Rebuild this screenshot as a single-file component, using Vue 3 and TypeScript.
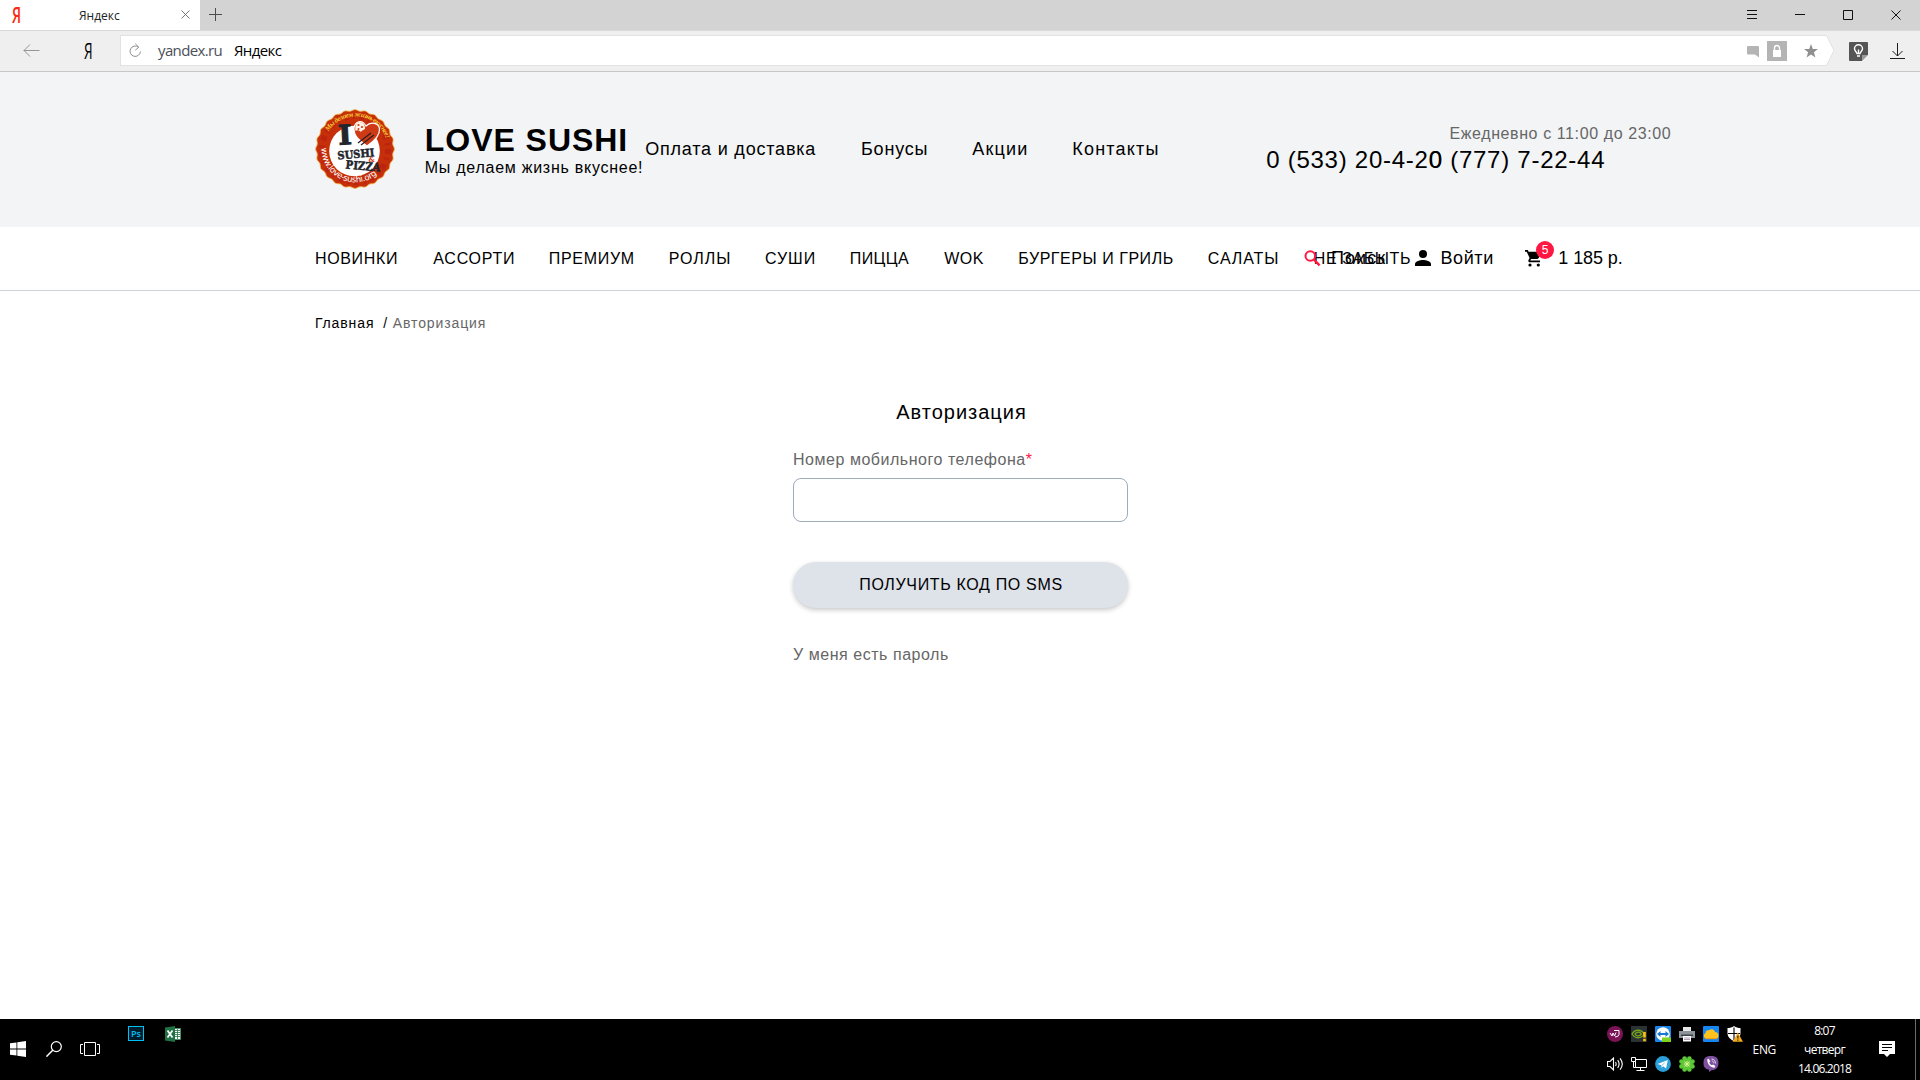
<script setup lang="ts">
interface Item {
  text: string
  width: number
  tracking: number
}

const menu: Item[] = [
  { text: 'Оплата и доставка', width: 215.8, tracking: 0.8 },
  { text: 'Бонусы', width: 111.3, tracking: 0.8 },
  { text: 'Акции', width: 100, tracking: 1.15 },
  { text: 'Контакты', width: 90, tracking: 1.2 },
]

const categories: Item[] = [
  { text: 'НОВИНКИ', width: 118.4, tracking: 0.68 },
  { text: 'АССОРТИ', width: 115.5, tracking: 0.75 },
  { text: 'ПРЕМИУМ', width: 120, tracking: 0.69 },
  { text: 'РОЛЛЫ', width: 96.1, tracking: 0.95 },
  { text: 'СУШИ', width: 84.9, tracking: 1 },
  { text: 'ПИЦЦА', width: 94.6, tracking: 0.41 },
  { text: 'WOK', width: 73.9, tracking: 0.4 },
  { text: 'БУРГЕРЫ И ГРИЛЬ', width: 189.6, tracking: 0.54 },
  { text: 'САЛАТЫ', width: 105.9, tracking: 0.88 },
  { text: 'НЕ ЗАБЫТЬ', width: 100, tracking: 0.6 },
]

const scallops: string = (() => {
  const steps = 144
  const points: string[] = []
  for (let i = 0; i < steps; i++) {
    const a = (i / steps) * Math.PI * 2
    const r = 38.7 + Math.cos(a * 24) * 0.7
    points.push(`${(40 + r * Math.cos(a)).toFixed(2)},${(40 + r * Math.sin(a)).toFixed(2)}`)
  }
  return points.join(' ')
})()

const itemStyle = (i: Item) => ({ width: `${i.width}px`, letterSpacing: `${i.tracking}px` })
</script>

<template>
  <div class="screen">
    <div class="tabs">
      <div class="tab">
        <span class="ya ya-red">Я</span>
        <span class="tab-title">Яндекс</span>
        <svg class="tab-close" width="9" height="9" viewBox="0 0 9 9"><path d="M.5.5l8 8M8.5.5l-8 8" stroke="#757575" fill="none" /></svg>
      </div>
      <svg class="plus" width="13" height="13" viewBox="0 0 13 13"><path d="M6.5 0v13M0 6.5h13" stroke="#4c4c4c" fill="none" /></svg>
      <svg class="window-controls" width="154" height="12" viewBox="0 0 154 12" fill="none" stroke="#111">
        <path d="M0 1.5h10M0 5.5h10M0 9.5h10M48 5.5h10M96.5 1.5h9v9h-9zM144.500 1.500l9 9M153.500 1.500l-9 9" />
      </svg>
    </div>

    <div class="toolbar">
      <svg class="back" width="17" height="13" viewBox="0 0 17 13" fill="none" stroke="#959595"><path d="M16.500 6.500H.8M7 .5l-6 6 6 6" /></svg>
      <span class="ya ya-black">Я</span>
      <div class="address">
        <svg class="reload" width="13" height="15" viewBox="0 0 13 15" fill="none" stroke="#8f8f8f"><path d="M9.500 4.200A5.200 5.200 0 1 0 11.400 8.500M6.300 .8l3.500 3.400-3.500 3" /></svg>
        <span class="host">yandex.ru</span>
        <span class="page-title">Яндекс</span>
        <svg class="speech" width="12" height="12" viewBox="0 0 12 12"><path d="M1 0h10q1 0 1 1v10.500L8 8.500H1q-1 0-1-1V1q0-1 1-1z" fill="#b4b4b4" /></svg>
        <svg class="lock" width="20" height="20" viewBox="0 0 20 20"><path fill="#b4b4b4" d="M0 0h20v20H0z" /><path fill="#fff" d="M6 9h8v7H6z" /><path d="M7.500 9V7a2.500 2.500 0 0 1 5 0v2" stroke="#fff" stroke-width="1.400" fill="none" /></svg>
        <svg class="star" width="14" height="14" viewBox="0 0 14 14"><path fill="#8f8f8f" d="M7 0l1.800 4.900 5.200.2-4.100 3.200 1.500 5.200L7 10.500l-4.400 3 1.500-5.200L0 5.100l5.200-.2z" /></svg>
      </div>
      <svg class="cap" width="10" height="31" viewBox="0 0 10 31"><path d="M0 0l1.500.5 7.500 15-7.500 15L0 31z" fill="#fff" /><path d="M0 .5h1.500l7.500 15-7.500 15H0" fill="none" stroke="#e2e2e2" /></svg>
      <svg class="bulb" width="19" height="19" viewBox="0 0 19 19">
        <path fill="#555" d="M1 0h17q1 0 1 1v12h-6v6H1q-1 0-1-1V1q0-1 1-1z" /><path fill="#999" d="M13 13h6l-6 6z" />
        <path d="M8 11.500C7.500 9.500 5.500 9 5.500 6.800a4 4 0 0 1 8 0C13.500 9 11.500 9.500 11 11.500z" fill="none" stroke="#fff" stroke-width="1.400" /><path d="M8 14h3M9.500 11V7.500" stroke="#fff" stroke-width="1.400" />
      </svg>
      <svg class="download" width="15" height="17" viewBox="0 0 15 17" fill="none" stroke="#1b1b1b"><path d="M7.500 0v13M2.500 8l5 5 5-5M0 15.500h15" /></svg>
    </div>

    <header class="header">
      <svg class="logo" width="80" height="80" viewBox="0 0 80 80">
        <defs>
          <path id="arc-top" d="M13.500 22.500A32 32 0 0 1 72.500 42" />
          <path id="arc-bottom" d="M6.500 39A33.800 33.800 0 0 0 66 61.500" />
        </defs>
        <polygon :points="scallops" fill="#c5300b" stroke="#f0b545" stroke-width=".8" />
        <circle cx="40" cy="40" r="33" fill="none" stroke="#b51715" stroke-width="6" stroke-dasharray="5 4 2 5" opacity=".5" />
        <circle cx="39.500" cy="42" r="25.300" fill="#fff" />
        <text class="script-text"><textPath href="#arc-top" textLength="72">Мы делаем жизнь вкуснее!</textPath></text>
        <text class="site-text"><textPath href="#arc-bottom" textLength="77">www.love-sushi.org</textPath></text>
        <path d="M52 37C44 31 38.500 27 39 19c1-7 8-9 12-2 5-5 13-3 13.500 3C65 27 58 33 52 37z" fill="#cf3a16" stroke="#fff" stroke-width="1.200" />
        <path d="M40.500 22c-1-6 1-9 4-9 4 0 6 4 5.500 7-1 1-3 1-4 3-2-2-4-2-5.500-1z" fill="#fff3e8" />
        <g fill="#cf3a16"><circle cx="43.500" cy="16" r="1.100" /><circle cx="47" cy="18" r="1.100" /><circle cx="43.500" cy="20" r="1" /></g>
        <path d="M43 34l13-10M46 36l13-10" stroke="#2a2020" stroke-width="1.300" />
        <g font-family="'DejaVu Serif', serif" font-weight="bold" fill="#22252c" stroke="#22252c" stroke-width=".5">
          <text x="23.500" y="35.500" font-size="27" textLength="13.500" lengthAdjust="spacingAndGlyphs" transform="rotate(-3 30 30)" stroke-width="1">I</text>
          <text x="22.500" y="49" font-size="11" textLength="37" lengthAdjust="spacingAndGlyphs" transform="rotate(-5 40 47)">SUSHI</text>
          <text x="30.500" y="61" font-size="11.500" textLength="35" lengthAdjust="spacingAndGlyphs" transform="rotate(5 48 58)">PIZZA</text>
          <text x="53.500" y="52.500" font-size="7" fill="#d63a14" stroke="none">&amp;</text>
        </g>
      </svg>
      <div class="brand">
        <h1>LOVE SUSHI</h1>
        <p>Мы делаем жизнь вкуснее!</p>
      </div>
      <nav class="menu">
        <a v-for="m in menu" :key="m.text" :style="itemStyle(m)">{{ m.text }}</a>
      </nav>
      <div class="contacts">
        <div class="hours">Ежедневно с 11:00 до 23:00</div>
        <div class="phones">
          <a>0 (533) 20-4-20</a>
          <a>0 (777) 7-22-44</a>
        </div>
      </div>
    </header>

    <div class="category-bar">
      <nav class="categories">
        <a v-for="c in categories" :key="c.text" :style="itemStyle(c)">{{ c.text }}</a>
      </nav>
      <div class="action search">
        <svg width="17" height="17" viewBox="0 0 17 17" fill="none" stroke="#ff1744"><circle cx="6.300" cy="6" r="4.800" stroke-width="2" /><path d="M9.800 9.500l5.800 5.800" stroke-width="2.400" /></svg>
        <span>Поиск</span>
      </div>
      <div class="action login">
        <svg width="16" height="16" viewBox="0 0 16 16"><circle cx="8" cy="4" r="4" /><path d="M0 16v-2c0-2.700 5.300-4 8-4s8 1.300 8 4v2z" /></svg>
        <span>Войти</span>
      </div>
      <div class="action cart">
        <svg width="17" height="17" viewBox="0 0 17 17"><path d="M0 0h2.800l.8 1.700H16c.6 0 1 .6.700 1.100l-3 5.300c-.3.500-.8.800-1.400.8H6.100L5.300 10.300l.2.300H15v1.700H5c-1.300 0-2.100-1.300-1.500-2.400l1.100-2L1.700 1.700H0z" /><circle cx="5" cy="15" r="1.600" /><circle cx="13.300" cy="15" r="1.600" /></svg>
        <b class="badge">5</b>
        <span>1 185 р.</span>
      </div>
    </div>

    <main class="content">
      <div class="crumbs"><a>Главная</a><i>/</i><span>Авторизация</span></div>
      <form class="auth" @submit.prevent>
        <h2>Авторизация</h2>
        <label for="phone">Номер мобильного телефона<em>*</em></label>
        <input id="phone" type="tel" />
        <button type="submit">ПОЛУЧИТЬ КОД ПО SMS</button>
        <a class="alt">У меня есть пароль</a>
      </form>
    </main>

    <footer class="taskbar">
      <svg class="start" width="16" height="16" viewBox="0 0 16 16" fill="#fff"><path d="M0 2.300l6.500-.9v6.100H0zM7.300 1.200L16 0v7.500H7.300zM0 8.400h6.500v6.200L0 13.700zM7.300 8.400H16V16l-8.700-1.200z" /></svg>
      <svg class="find" width="16" height="16" viewBox="0 0 16 16" fill="none" stroke="#fff" stroke-width="1.200"><circle cx="10.300" cy="5.600" r="5" /><path d="M6.700 9.200L.4 15.600" stroke-width="1.500" /></svg>
      <svg class="views" width="20" height="14" viewBox="0 0 20 14" fill="none" stroke="#fff"><path d="M4.500.5h11v13h-11zM3 2.500H.5v9H3M17 2.500h2.500v9H17" /></svg>
      <span class="ps">Ps</span>
      <svg class="excel" width="16" height="16" viewBox="0 0 16 16"><path fill="#fff" d="M8 2h8v12H8z" /><path d="M10 4.500h5M10 6.500h5M10 8.500h5M10 10.500h5M12.500 3v10M15.500 2v12M9 2.500h7M9 13.500h7" stroke="#207245" stroke-width=".8" /><path fill="#207245" d="M0 1.500L10 0v16L0 14.500z" /><path d="M2.500 4.500l5 7M7.500 4.500l-5 7" stroke="#fff" stroke-width="1.700" /></svg>

      <div class="tray">
        <svg viewBox="0 0 16 16"><circle cx="8" cy="8" r="8" fill="#7b1457" /><path d="M3 7l2 3 1-3 1.500 3L9 6.500M7 4.500h5v4q-.5 2.500-4 2.500" fill="none" stroke="#fff" stroke-width="1" /></svg>
        <svg viewBox="0 0 16 16"><path fill="#2b3234" d="M0 0h16v16H0z" /><path d="M1 8c3-5 9-5 12.500 0-3.500 5-9.500 5-12.500 0zM4 8c2-2.500 5-2.500 6.500 0-2 2.500-5 2.500-6.500 0z" fill="none" stroke="#76a51c" stroke-width="1.300" /><path d="M13.500 6v5.500M13.500 12.800v2.400" stroke="#ffc20e" stroke-width="2.600" /></svg>
        <svg viewBox="0 0 16 16"><rect width="16" height="16" rx="1" fill="#1b86e5" /><circle cx="8" cy="8" r="6.800" fill="#fff" /><path d="M2 8l3.500-3v2h5V5L14 8l-3.500 3V9h-5v2z" fill="#1b78d0" /><path fill="#7fd321" d="M7 11.500h9V16H7z" /></svg>
        <svg viewBox="0 0 16 16"><path fill="#e8e8e8" d="M4 1h8v4H4z" /><path fill="#8d9499" d="M0 5h16v7H0z" /><path fill="#3b4044" d="M2 8.500h12V10H2z" /><path fill="#fff" d="M4 10h8v5.500H4z" /><path d="M5 12h6M5 13.500h6" stroke="#879" stroke-width=".7" /></svg>
        <svg viewBox="0 0 16 16"><rect width="16" height="16" rx="1" fill="#1686f0" /><path fill="#ffc21f" d="M3.500 13a3.200 3.200 0 0 1-1-6A3 3 0 0 1 6 4.300 3.500 3.500 0 0 1 12 6a3.600 3.600 0 0 1 1 7z" /><path d="M2 12.700h12" stroke="#f2930b" /></svg>
        <svg viewBox="0 0 16 16"><path fill="#fff" d="M7 0c2 1.600 4 2 6.500 2v5c0 4-3 6.500-6.500 8C3.500 13.500.5 11 .5 7V2C3 2 5 1.600 7 0z" /><path d="M7 1.500V14M1 7.500h12" stroke="#000" stroke-width="1.100" /><path fill="#f6ac1a" d="M10.800 6.500L16 15.800H5.800z" /><path d="M10.900 9.500v3M10.900 13.500v1.200" stroke="#222" stroke-width="1.200" /></svg>
        <svg viewBox="0 0 16 16" fill="none" stroke="#fff" stroke-width="1.100"><path d="M.5 5.500h2.500l3.500-3.500v12L3 10.500H.5zM8.500 6q1.300 2 0 4M10.700 4.200q2.800 3.800 0 7.600M13 2.300q4.600 5.700 0 11.400" /></svg>
        <svg viewBox="0 0 16 16" fill="none" stroke="#fff"><path d="M4.500 5.500v6h11v-8H5M9.500 12v3M5.500 14.500h8M.5 1.500h4v4h-4zM2.500 5.500v6h2" /></svg>
        <svg viewBox="0 0 16 16"><circle cx="8" cy="8" r="7.900" fill="#2b9fd9" /><path fill="#fff" d="M2.500 7.900L12.800 4l-1.700 8.500-3-2.200-1.500 1.400-.3-2.500L2.500 7.900z" /><path d="M6.300 9l5-3.700L7.500 9.800" fill="#a9cde2" /></svg>
        <svg viewBox="0 0 16 16"><g fill="#5ec937"><circle cx="5.600" cy="2.500" r="2.300" /><circle cx="10.400" cy="2.500" r="2.300" /><circle cx="2.500" cy="5.600" r="2.300" /><circle cx="13.500" cy="5.600" r="2.300" /><circle cx="2.500" cy="10.400" r="2.300" /><circle cx="13.500" cy="10.400" r="2.300" /><circle cx="5.600" cy="13.500" r="2.300" /><circle cx="10.400" cy="13.500" r="2.300" /><circle cx="8" cy="8" r="5.200" /></g><path d="M5.500 5.500l5 5M10.500 5.500l-5 5M8 5v6M5 8h6" stroke="#e6f79b" stroke-width=".9" /></svg>
        <svg viewBox="0 0 16 16"><path fill="#7d519f" d="M8 0c5.500 0 7.500 2.500 7.500 7s-2.500 7-6.500 7l-3 2v-2.300C2 13 .5 11 .5 7 .5 2.500 2.500 0 8 0z" /><path fill="#fff" d="M4.300 3.200l1.400-.4 1.600 2.400-1 1.200c.4 1.400 1.300 2.300 2.600 2.800l1.200-.8 2.200 1.700-.8 1.600C7.500 11.500 4 8 4.300 3.200z" /><path d="M8.500 3c2.700.2 3.900 1.800 4 4.500M8.800 5c1.400.2 1.900 1 2 2.300" fill="none" stroke="#fff" stroke-width=".8" /></svg>
      </div>
      <span class="lang">ENG</span>
      <div class="clock"><span class="time">8:07</span><span class="day">четверг</span><span class="date">14.06.2018</span></div>
      <svg class="notes" width="16" height="16" viewBox="0 0 16 16"><path fill="#fff" d="M0 0h16v13h-5l-3 3-3-3H0z" /><path d="M3 3.500h10M3 6.500h10M3 9.500h6" stroke="#000" /></svg>
      <div class="peek"></div>
    </footer>
  </div>
</template>

<style>
body {
  margin: 0;
  background: #fff;
}
</style>

<style scoped>
.screen {
  display: flex;
  flex-direction: column;
  width: 1920px;
  height: 1080px;
  overflow: hidden;
  font-family: "Liberation Sans", Arial, sans-serif;
  color: #000;
}
svg {
  display: block;
  flex: none;
}
span,
a {
  white-space: nowrap;
}

.tabs {
  display: flex;
  flex: none;
  height: 30px;
  background: #d3d3d3;
  border-bottom: 1px solid #d9d9d9;
}
.tab {
  display: flex;
  width: 200px;
  height: 30px;
  background: #fff;
}
.ya {
  flex: none;
  font-family: "Open Sans", sans-serif;
  font-size: 22px;
  line-height: 30px;
  transform-origin: left;
}
.ya-red {
  width: 67px;
  margin-left: 12px;
  color: #f92b12;
  font-weight: 600;
  line-height: 28px;
  transform: scaleX(0.64);
}
.tab-title {
  width: 102px;
  font: 12px/31px "Open Sans", sans-serif;
  color: #222;
}
.tab-close {
  margin-top: 10px;
}
.plus {
  margin: 8px 0 0 9px;
}
.window-controls {
  margin: 9px 19px 0 auto;
}

.toolbar {
  display: flex;
  flex: none;
  height: 40px;
  background: #efefef;
  border-bottom: 1px solid #c6c8c8;
}
.back {
  margin: 13px 44px 0 22.500px;
}
.ya-black {
  width: 36.500px;
  line-height: 38px;
  transform: scaleX(0.62);
}
.address {
  display: flex;
  box-sizing: border-box;
  width: 1705px;
  height: 31px;
  margin-top: 4px;
  background: #fff;
  border: 1px solid #e2e2e2;
  border-right: 0;
  font: 15px/29px "Open Sans", sans-serif;
  letter-spacing: -0.62px;
}
.reload {
  margin: 7px 0 0 8px;
}
.host {
  width: 76px;
  margin-left: 16px;
  color: #4b4f59;
}
.page-title {
  color: #000;
}
.speech {
  margin: 10px 8px 0 auto;
}
.lock {
  margin: 5px 16.500px 0 0;
}
.star {
  margin: 8px 7.500px 0 0;
}
.cap {
  margin-top: 4px;
}
.bulb {
  margin: 11px 0 0 14px;
}
.download {
  margin: 12px 0 0 22px;
}

.header {
  display: flex;
  flex: none;
  box-sizing: border-box;
  height: 155px;
  padding-left: 315px;
  background: #f2f4f6;
}
.logo {
  margin-top: 37px;
}
.script-text {
  font: italic bold 7px "Liberation Serif", serif;
  fill: #f7c930;
}
.site-text {
  font: 8.5px "DejaVu Sans", sans-serif;
  fill: #fff;
}
.brand {
  width: 220.400px;
  margin: 51px 0 0 29.800px;
}
.brand h1 {
  margin: 0;
  font-size: 32px;
  line-height: 34px;
  letter-spacing: 0.960px;
  white-space: nowrap;
}
.brand p {
  margin: 1px 0 0;
  font-size: 16px;
  line-height: 20px;
  letter-spacing: 0.740px;
  white-space: nowrap;
}
.menu {
  display: flex;
  width: 621px;
  margin-top: 65px;
  font-size: 18px;
  line-height: 24px;
}
.menu a,
.categories a {
  flex: none;
}
.contacts {
  width: 405px;
  margin-top: 52px;
}
.hours {
  padding-left: 183.300px;
  color: #666;
  font-size: 16px;
  line-height: 20px;
  letter-spacing: 0.600px;
  white-space: nowrap;
}
.phones {
  display: flex;
  margin-top: 2px;
  font-size: 24px;
  line-height: 28px;
  letter-spacing: 0.740px;
}
.phones a {
  flex: none;
  width: 162.500px;
}

.category-bar {
  display: flex;
  flex: none;
  align-items: center;
  height: 63px;
  padding-left: 314.900px;
  border-bottom: 1px solid #cdd5da;
}
.categories {
  display: flex;
  width: 989.600px;
  font-size: 16px;
  line-height: 20px;
}
.action {
  position: relative;
  display: flex;
  flex: none;
  align-items: center;
  font-size: 18px;
  line-height: 24px;
}
.action span {
  margin-bottom: 2px;
}
.search {
  width: 110.500px;
  letter-spacing: 1.050px;
}
.search span {
  margin-left: 9.500px;
}
.login {
  width: 110px;
  letter-spacing: 0.600px;
}
.login svg {
  margin-bottom: 1px;
}
.login span {
  margin-left: 9.500px;
}
.cart span {
  margin-left: 16.300px;
  letter-spacing: -0.080px;
}
.badge {
  position: absolute;
  left: 11px;
  top: -5px;
  width: 18px;
  height: 18px;
  border-radius: 50%;
  background: #ff1744;
  color: #fff;
  font-size: 12px;
  font-weight: 400;
  line-height: 18px;
  text-align: center;
}

.content {
  flex: 1;
  padding-top: 23px;
}
.crumbs {
  display: flex;
  margin-left: 314.900px;
  font-size: 14px;
  line-height: 18px;
  letter-spacing: 0.880px;
}
.crumbs a {
  width: 68.400px;
}
.crumbs i {
  width: 9.500px;
  font-style: normal;
}
.crumbs span {
  color: #666;
}
.auth {
  display: flex;
  flex-direction: column;
  width: 335px;
  margin: 68px 0 0 793px;
}
.auth h2 {
  margin: 0 0 26px;
  padding-left: 2px;
  font-size: 20px;
  font-weight: 400;
  line-height: 24px;
  letter-spacing: 1px;
  text-align: center;
}
.auth label {
  color: #666;
  font-size: 16px;
  line-height: 20px;
  letter-spacing: 0.530px;
  white-space: nowrap;
}
.auth em {
  color: #ff1744;
  font-style: normal;
}
.auth input {
  box-sizing: border-box;
  height: 44px;
  margin: 8px 0 40px;
  border: 1px solid #9eabb9;
  border-radius: 8px;
  background: #fff;
}
.auth button {
  height: 46px;
  padding: 0 0 0 1px;
  border: 0;
  border-radius: 23px;
  background: #dee2e9;
  box-shadow: 0 2px 5px rgba(0, 0, 0, 0.22);
  font: 16px/20px "Liberation Sans", Arial, sans-serif;
  letter-spacing: 0.660px;
  color: #000;
}
.alt {
  margin-top: 37px;
  color: #666;
  font-size: 16px;
  line-height: 20px;
  letter-spacing: 0.540px;
}

.taskbar {
  display: flex;
  flex: none;
  height: 61px;
  background: #000;
  color: #fff;
  font: 12px/19px "Open Sans", sans-serif;
}
.start {
  margin: 22px 0 0 10px;
}
.find {
  margin: 22px 0 0 20px;
}
.views {
  margin: 23px 0 0 18px;
}
.ps {
  box-sizing: border-box;
  width: 16px;
  height: 15px;
  margin: 7px 0 0 28px;
  border: 1px solid #00c1f3;
  background: #001d2b;
  color: #00c1f3;
  font-size: 9px;
  font-weight: 600;
  line-height: 13px;
  text-align: center;
}
.excel {
  margin: 7px 0 0 21px;
}
.tray {
  display: grid;
  grid-template-columns: repeat(6, 24px);
  grid-template-rows: 30px 30px;
  place-items: center;
  margin-left: 1422px;
}
.tray svg {
  width: 16px;
  height: 16px;
}
.lang {
  width: 45.400px;
  margin: 21px 0 0 5.600px;
  letter-spacing: -0.350px;
}
.clock {
  display: flex;
  flex-direction: column;
  align-items: center;
  width: 53px;
  margin: 2px 1px 0 0;
}
.time {
  letter-spacing: -0.800px;
}
.day {
  letter-spacing: -0.720px;
}
.date {
  letter-spacing: -0.810px;
}
.notes {
  margin: 22px 0 0 27px;
}
.peek {
  width: 4px;
  margin-left: 20px;
  border-left: 1px solid #6b6b6b;
}
</style>
